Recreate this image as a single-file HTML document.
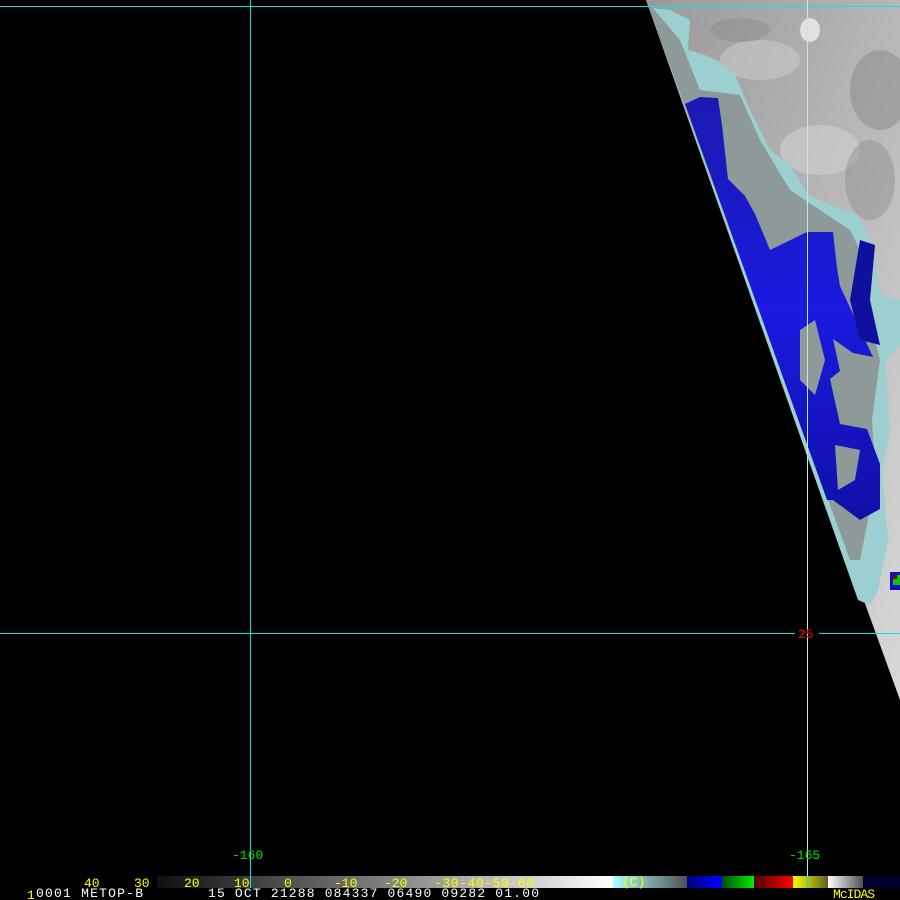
<!DOCTYPE html>
<html><head><meta charset="utf-8"><style>
html,body{margin:0;padding:0;background:#000;width:900px;height:900px;overflow:hidden}
svg{display:block}
text{font-family:"Liberation Mono","DejaVu Sans Mono",monospace;font-size:13px}
</style></head><body>
<svg width="900" height="900" viewBox="0 0 900 900" xmlns="http://www.w3.org/2000/svg">
<defs>
<linearGradient id="g1" x1="0" y1="0" x2="1" y2="1">
<stop offset="0" stop-color="#9a9a9a"/><stop offset="0.4" stop-color="#b0b0b0"/><stop offset="0.7" stop-color="#c4c4c4"/><stop offset="1" stop-color="#d8d8d8"/>
</linearGradient>
<linearGradient id="bl" x1="0" y1="0" x2="0" y2="1">
<stop offset="0" stop-color="#1a1ab0"/><stop offset="0.5" stop-color="#1a1ae0"/><stop offset="1" stop-color="#1010a8"/>
</linearGradient>
</defs>
<rect width="900" height="900" fill="#000"/>
<polygon points="646,0 900,0 900,700" fill="url(#g1)"/>
<ellipse cx="820" cy="150" rx="40" ry="25" fill="#d0d0d0" opacity="0.6"/>
<ellipse cx="880" cy="90" rx="30" ry="40" fill="#888" opacity="0.5"/>
<ellipse cx="760" cy="60" rx="40" ry="20" fill="#d0d0d0" opacity="0.5"/>
<ellipse cx="810" cy="30" rx="10" ry="12" fill="#eee" opacity="0.8"/>
<ellipse cx="870" cy="180" rx="25" ry="40" fill="#888" opacity="0.4"/>
<ellipse cx="740" cy="30" rx="30" ry="12" fill="#888" opacity="0.4"/>
<polygon points="650,8 670,10 690,20 688,50 705,55 720,62 735,75 750,110 770,150 790,165 808,195 830,205 858,215 872,245 880,295 900,300 900,345 885,362 890,430 882,470 888,540 878,590 870,605 858,600 646,0" fill="#9cd0d0"/>
<polygon points="700,90 740,95 760,140 790,190 820,210 850,230 865,260 870,320 880,360 872,420 875,470 868,520 860,560 850,560 646,0 680,40" fill="#8e9a9a"/>
<polygon points="685,104 700,97 718,98 722,125 728,179 745,196 755,214 770,250 807,232 833,232 837,268 840,286 873,357 853,353 833,339 840,371 830,379 840,424 867,429 880,464 880,509 860,520 833,500 827,500" fill="url(#bl)"/>
<polygon points="860,240 875,245 870,300 880,345 860,340 850,300" fill="#1010a0"/>
<polygon points="800,330 815,320 825,360 815,395 800,380" fill="#8e9a9a"/>
<polygon points="835,445 860,450 855,480 838,490" fill="#8e9a9a"/>
<rect x="890" y="572" width="10" height="18" fill="#1010c0"/>
<rect x="893" y="575" width="7" height="10" fill="#10c010"/>
<rect x="893" y="575" width="4" height="4" fill="#800"/>
<g shape-rendering="crispEdges">
<rect x="0" y="6" width="900" height="1" fill="#00e8e8"/>
<rect x="0" y="633" width="795" height="1" fill="#00e8e8"/>
<rect x="819" y="633" width="81" height="1" fill="#00e8e8"/>
<rect x="250" y="0" width="1" height="888" fill="#00e8e8"/>
<rect x="807" y="0" width="1" height="888" fill="#bfeaea"/>
</g>
<text x="798" y="638" fill="#f00" font-size="12">25</text>
<text x="232" y="859" fill="#00e000" font-size="14">-160</text>
<text x="789" y="859" fill="#00e000" font-size="14">-165</text>
<defs>
<linearGradient id="cb1" x1="0" x2="1"><stop offset="0" stop-color="#101010"/><stop offset="0.5" stop-color="#808080"/><stop offset="1" stop-color="#ffffff"/></linearGradient>
<linearGradient id="cb2" x1="0" x2="1"><stop offset="0" stop-color="#a8ffff"/><stop offset="1" stop-color="#505050"/></linearGradient>
<linearGradient id="cb3" x1="0" x2="1"><stop offset="0" stop-color="#000080"/><stop offset="1" stop-color="#0000ff"/></linearGradient>
<linearGradient id="cb4" x1="0" x2="1"><stop offset="0" stop-color="#005000"/><stop offset="1" stop-color="#00f000"/></linearGradient>
<linearGradient id="cb5" x1="0" x2="1"><stop offset="0" stop-color="#500000"/><stop offset="1" stop-color="#ff0000"/></linearGradient>
<linearGradient id="cb6" x1="0" x2="1"><stop offset="0" stop-color="#ffff00"/><stop offset="1" stop-color="#606020"/></linearGradient>
<linearGradient id="cb7" x1="0" x2="1"><stop offset="0" stop-color="#ffffff"/><stop offset="1" stop-color="#505050"/></linearGradient>
</defs>
<g shape-rendering="crispEdges">
<rect x="157" y="876" width="456" height="12" fill="url(#cb1)"/>
<rect x="613" y="876" width="74" height="12" fill="url(#cb2)"/>
<rect x="687" y="876" width="35" height="12" fill="url(#cb3)"/>
<rect x="722" y="876" width="32" height="12" fill="url(#cb4)"/>
<rect x="754" y="876" width="39" height="12" fill="url(#cb5)"/>
<rect x="793" y="876" width="35" height="12" fill="url(#cb6)"/>
<rect x="828" y="876" width="35" height="12" fill="url(#cb7)"/>
<rect x="863" y="876" width="37" height="12" fill="#000030"/>
<rect x="807" y="876" width="1" height="12" fill="#00e8e8"/>
<rect x="250" y="876" width="1" height="12" fill="#00e8e8"/>
</g>
<g fill="#ffff00" font-size="13">
<text x="84" y="887">40</text><text x="134" y="887">30</text><text x="184" y="887">20</text><text x="234" y="887">10</text>
<text x="284" y="887">0</text><text x="334" y="887">-10</text><text x="384" y="887">-20</text>
<text x="434" y="887" textLength="100">-30-40-50-60</text><text x="622" y="886" font-size="11">(C)</text>
<text x="833" y="898" font-size="13" textLength="42">McIDAS</text>
<text x="27" y="899" font-size="12">1</text>
</g>
<text x="36" y="897" fill="#fff" font-size="15" textLength="107">0001 METOP-B</text>
<text x="208" y="897" fill="#fff" font-size="15" textLength="331">15 OCT 21288 084337 06490 09282 01.00</text>
</svg>
</body></html>
